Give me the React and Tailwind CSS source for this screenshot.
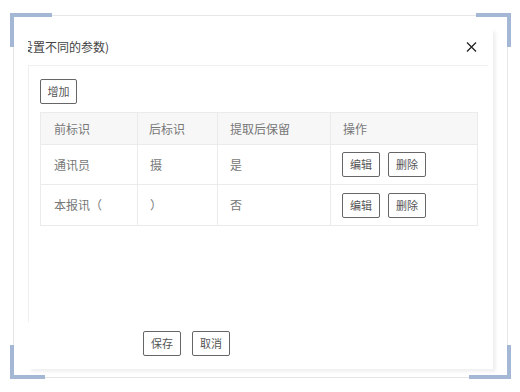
import React from "react";

const font = { fontFamily: '"Noto Sans CJK SC", "Noto Sans", sans-serif' };

function Btn({ children, className = "" }) {
  return (
    <button
      className={
        "flex items-center justify-center h-[25px] border border-[#666] rounded-[2px] bg-white text-[11px] text-[#555] leading-none " +
        className
      }
    >
      {children}
    </button>
  );
}

export default function App() {
  const rows = [
    ["通讯员", "摄", "是"],
    ["本报讯（", "）", "否"],
  ];
  return (
    <div className="w-[520px] h-[392px] bg-white relative overflow-hidden" style={font}>
      {/* outer frame */}
      <div className="ml-[13px] mt-[15px] w-[495px] h-[363px] border border-[#e6e6e6] pl-[14px] pt-[12px]">
        {/* dialog */}
        <div className="w-[465px] h-[341px] bg-white shadow-[3px_3px_3px_rgba(0,0,0,0.06)] flex flex-col overflow-hidden">
          {/* header */}
          <div className="h-[38px] mr-[5px] border-b border-[#f0f0f0] flex items-center justify-between shrink-0">
            <span className="ml-[-7px] text-[12px] text-[#444]">设置不同的参数)</span>
            <svg width="11" height="10" viewBox="0 0 11 10" className="mr-[11px]">
              <path d="M1 0.5 L10 9.5 M10 0.5 L1 9.5" stroke="#222" strokeWidth="1.3" />
            </svg>
          </div>
          {/* body */}
          <div className="h-[256px] border-l border-[#efefef] pl-[11px] pt-[13px] pr-[15px] shrink-0">
            <Btn className="w-[37px] h-[24px]">增加</Btn>
            <div className="mt-[8px] w-[438px] border border-[#ebebeb] text-[12px] text-[#777]">
              <div className="flex h-[32px] bg-[#f7f7f7] border-b border-[#ebebeb]">
                <div className="w-[97px] pl-[13px] flex items-center border-r border-[#ebebeb]">前标识</div>
                <div className="w-[80px] pl-[11px] flex items-center border-r border-[#ebebeb]">后标识</div>
                <div className="w-[113px] pl-[12px] flex items-center border-r border-[#ebebeb]">提取后保留</div>
                <div className="flex-1 pl-[12px] flex items-center">操作</div>
              </div>
              {rows.map((r, i) => (
                <div key={i} className={"flex h-[40px] " + (i === 0 ? "border-b border-[#ebebeb]" : "")}>
                  <div className="w-[97px] pl-[13px] flex items-center border-r border-[#ebebeb]">{r[0]}</div>
                  <div className="w-[80px] pl-[12px] flex items-center border-r border-[#ebebeb]">{r[1]}</div>
                  <div className="w-[113px] pl-[12px] flex items-center border-r border-[#ebebeb]">{r[2]}</div>
                  <div className="flex-1 pl-[11px] flex items-center gap-[8px]">
                    <Btn className="w-[38px]">编辑</Btn>
                    <Btn className="w-[38px]">删除</Btn>
                  </div>
                </div>
              ))}
            </div>
          </div>
          {/* footer */}
          <div className="flex gap-[11px] pl-[115px] pt-[9px]">
            <Btn className="w-[38px]">保存</Btn>
            <Btn className="w-[38px]">取消</Btn>
          </div>
        </div>
      </div>

      {/* corner accents */}
      <div className="absolute left-[10px] top-[13px] w-[42px] h-[4px] bg-[#a4b7d5]" />
      <div className="absolute left-[10px] top-[13px] w-[4px] h-[34px] bg-[#a4b7d5]" />
      <div className="absolute left-[476px] top-[13px] w-[35px] h-[4px] bg-[#a4b7d5]" />
      <div className="absolute left-[507px] top-[13px] w-[4px] h-[34px] bg-[#a4b7d5]" />
      <div className="absolute left-[10px] top-[345px] w-[4px] h-[34px] bg-[#a4b7d5]" />
      <div className="absolute left-[10px] top-[375px] w-[35px] h-[4px] bg-[#a4b7d5]" />
      <div className="absolute left-[507px] top-[345px] w-[4px] h-[34px] bg-[#a4b7d5]" />
      <div className="absolute left-[469px] top-[375px] w-[42px] h-[4px] bg-[#a4b7d5]" />
    </div>
  );
}
